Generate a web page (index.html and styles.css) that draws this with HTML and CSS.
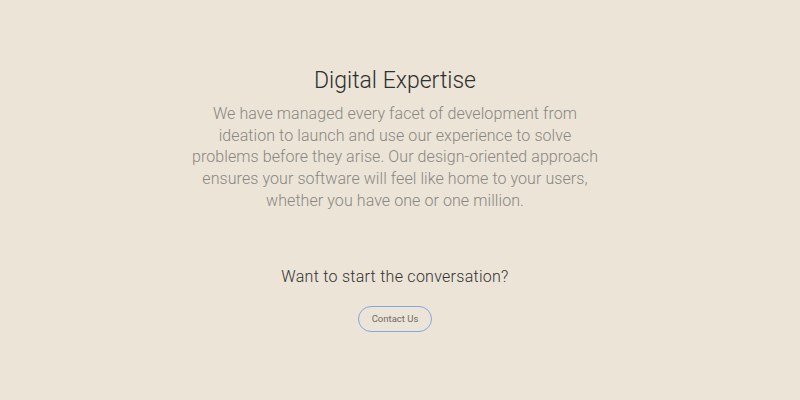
FILE: index.html
```html
<!DOCTYPE html>
<html>
<head>
<meta charset="utf-8">
<link rel="stylesheet" href="styles.css">
</head>
<body>
<main class="page">
  <section class="intro">
    <h1 class="title">Digital Expertise</h1>
    <p class="lead">We have managed every facet of development from ideation to launch and use our experience to solve problems before they arise. Our design-oriented approach ensures your software will feel like home to your users, whether you have one or one million.</p>
  </section>
  <section class="cta">
    <h2 class="cta-title">Want to start the conversation?</h2>
    <a class="btn" href="#">Contact Us</a>
  </section>
</main>
</body>
</html>
```
FILE: styles.css
```css
html, body {
  margin: 0;
  padding: 0;
}
body {
  background: #ebe4d7;
  font-family: Roboto, "Liberation Sans", sans-serif;
  width: 800px;
  height: 400px;
  overflow: hidden;
}
.page {
  display: flex;
  flex-direction: column;
  align-items: center;
  width: 790px;
  padding-top: 66px;
}
.intro {
  display: flex;
  flex-direction: column;
  align-items: center;
  width: 416px;
  text-align: center;
}
.title {
  margin: 0;
  font-weight: 300;
  font-size: 23px;
  line-height: 30px;
  color: #2f2f2f;
}
.lead {
  margin: 7px 0 0;
  font-weight: 300;
  font-size: 16px;
  letter-spacing: 0.08px;
  line-height: 21.7px;
  color: #8a8782;
}
.cta {
  display: flex;
  flex-direction: column;
  align-items: center;
  margin-top: 53px;
}
.cta-title {
  margin: 0;
  font-weight: 300;
  font-size: 16px;
  letter-spacing: 0.27px;
  line-height: 24px;
  color: #333;
}
.btn {
  margin-top: 17px;
  display: inline-flex;
  align-items: center;
  justify-content: center;
  height: 26px;
  box-sizing: border-box;
  padding: 0 13px;
  border: 1px solid #82a8e2;
  border-radius: 13px;
  font-size: 9.5px;
  color: #6d6b68;
  text-decoration: none;
}
```
